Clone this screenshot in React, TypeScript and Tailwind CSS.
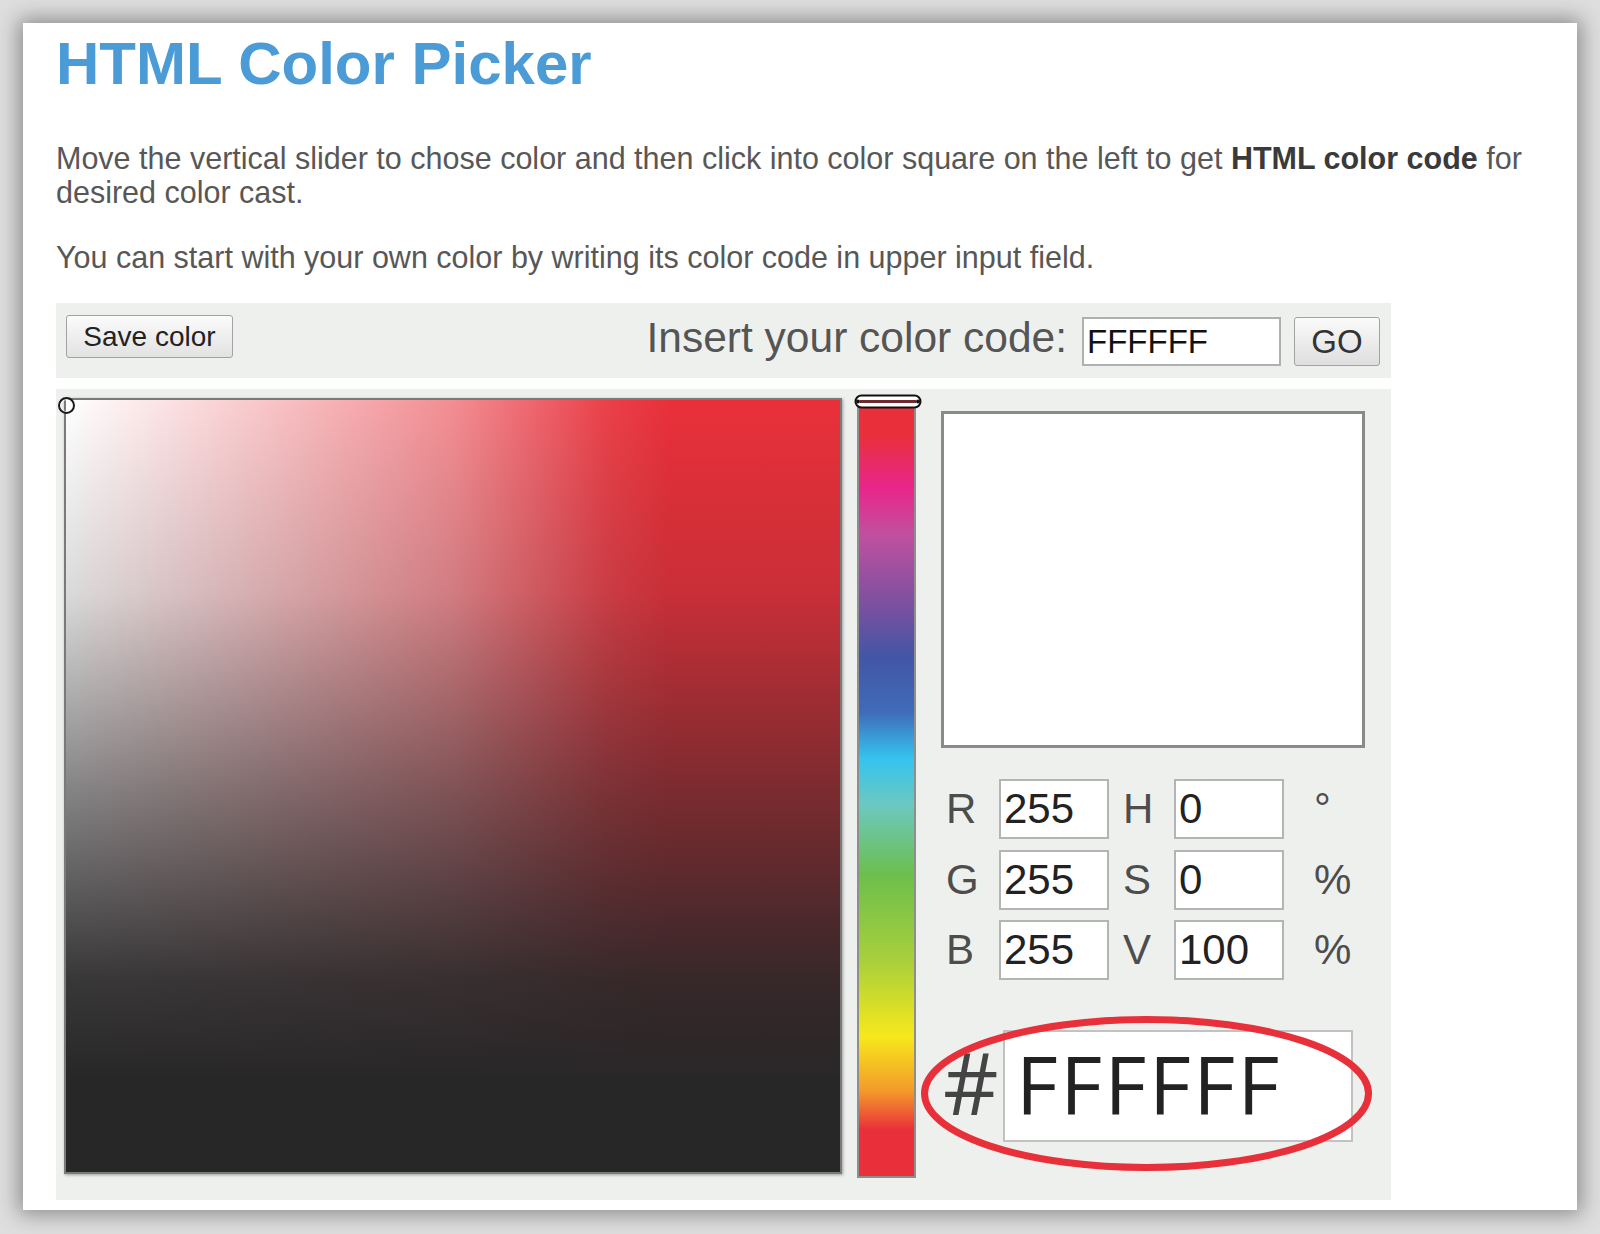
const rows = [
  { label: "R", value: "255", label2: "H", value2: "0", unit: "°" },
  { label: "G", value: "255", label2: "S", value2: "0", unit: "%" },
  { label: "B", value: "255", label2: "V", value2: "100", unit: "%" },
];

const Field = ({ value }: { value: string }) => (
  <div className="h-[60px] w-[110px] border-2 border-[#b4b4b4] bg-white pl-[3px] text-[42px] leading-[56px] text-[#222]">
    {value}
  </div>
);

const App = () => {
  return (
    <div className="min-h-screen bg-[#dedede] px-[23px] pt-[23px] pb-[24px] font-['Liberation_Sans',Arial,sans-serif]">
      <div className="bg-white pl-[33px] pr-[20px] pt-[6px] pb-[10px] shadow-[0_0_20px_4px_rgba(0,0,0,0.38)]">
        <h1 className="text-[60px] font-bold leading-[69px] text-[#4b9bd6]">HTML Color Picker</h1>

        <p className="mt-[43px] text-[30.5px] leading-[34px] text-[#575757]">
          Move the vertical slider to chose color and then click into color square on the left to get{" "}
          <b className="text-[#3a3a3a]">HTML color code</b> for desired color cast.
        </p>
        <p className="mt-[31px] text-[30.5px] leading-[34px] text-[#575757]">
          You can start with your own color by writing its color code in upper input field.
        </p>

        {/* toolbar */}
        <div className="mt-[29px] flex h-[75px] w-[1335px] items-start justify-between bg-[#eef0ee] pl-[10px] pr-[11px]">
          <button className="mt-[12px] h-[43px] w-[167px] rounded-[3px] border border-[#a2a2a2] bg-[linear-gradient(to_bottom,#fbfbfb,#e2e2e2)] text-[28px] leading-[41px] text-[#222]">
            Save color
          </button>
          <div className="mt-[14px] flex items-start">
            <span className="text-[42.5px] leading-[42px] text-[#555]">Insert your color code:</span>
            <div className="ml-[15px] h-[49px] w-[199px] border-2 border-[#b0b0b0] bg-white pl-[3px] text-[33px] leading-[45px] text-[#111]">
              FFFFFF
            </div>
            <button className="ml-[13px] h-[49px] w-[86px] rounded-[3px] border border-[#a2a2a2] bg-[linear-gradient(to_bottom,#fbfbfb,#dedede)] text-[33px] leading-[47px] text-[#333]">
              GO
            </button>
          </div>
        </div>

        {/* picker panel */}
        <div className="mt-[11px] flex h-[811px] w-[1335px] items-start bg-[#eef0ee] pl-[8px]">
          <div className="relative mt-[9px] h-[776px] w-[778px] border-2 border-[#7a7a7a] bg-[#e9303a] shadow-[1px_1px_3px_rgba(0,0,0,0.35)]">
            <div className="h-full w-full bg-[linear-gradient(to_right,rgba(255,255,255,1)_0%,rgba(255,255,255,0.73)_25%,rgba(255,255,255,0.45)_50%,rgba(255,255,255,0.08)_70%,rgba(255,255,255,0)_78%)]">
              <div className="h-full w-full bg-[linear-gradient(to_bottom,rgba(40,39,40,0)_0%,rgba(40,39,40,0.17)_25%,rgba(40,39,40,0.56)_50%,rgba(40,39,40,0.92)_75%,rgba(40,39,40,1)_88%)]" />
            </div>
            <div className="absolute -left-[8px] -top-[3px] h-[17px] w-[17px] rounded-full border-2 border-[#1a1a1a] shadow-[inset_0_0_0_1px_#fff]" />
          </div>

          <div className="relative ml-[15px] mt-[12px] h-[777px] w-[59px] border-2 border-[#8e8e8e] bg-[linear-gradient(to_bottom,#e9303a_0%,#e9303a_4%,#e8268a_11%,#c0509f_17%,#7550a0_27%,#4256a6_33%,#3f6cb8_40%,#34c4ee_46%,#6cc8c0_52%,#6cbf4c_61%,#a8cf3c_72%,#f7e81c_82%,#f39a2a_89%,#e9303a_94%,#e9303a_100%)]">
            <svg className="absolute -left-[5px] -top-[9px]" width="68" height="15" viewBox="0 0 68 15">
              <rect x="1.5" y="1.5" width="65" height="12" rx="6" fill="#fff" stroke="#111" strokeWidth="2" />
              <line x1="6" y1="7.5" x2="62" y2="7.5" stroke="#6e2a2e" strokeWidth="3" />
              <circle cx="4" cy="7.5" r="2" fill="#111" />
              <circle cx="64" cy="7.5" r="2" fill="#111" />
            </svg>
          </div>

          <div className="ml-[25px] mt-[22px] flex flex-col">
            <div className="h-[337px] w-[424px] border-[3px] border-[#8a8a8a] bg-white" />

            <div className="mt-[31px] flex flex-col gap-[10.5px]">
              {rows.map((r) => (
                <div key={r.label} className="flex h-[60px] items-center">
                  <span className="w-[58px] pl-[5px] text-[42px] leading-[60px] text-[#4d4d4d]">{r.label}</span>
                  <Field value={r.value} />
                  <span className="w-[65px] pl-[14px] text-[42px] leading-[60px] text-[#4d4d4d]">{r.label2}</span>
                  <Field value={r.value2} />
                  <span className="pl-[30px] text-[42px] leading-[60px] text-[#4d4d4d]">{r.unit}</span>
                </div>
              ))}
            </div>

            <div className="relative mt-[50px] flex items-start">
              <span className="w-[62px] pl-[2px] font-['Open_Sans',sans-serif] text-[86px] leading-[104px] text-[#444]">#</span>
              <div className="h-[112px] w-[350px] border-2 border-[#c2c2c2] bg-white pl-[11px] font-['Open_Sans',sans-serif] text-[81px] leading-[104px] tracking-[2.5px] text-[#222]">
                FFFFFF
              </div>
              <svg className="pointer-events-none absolute -left-[21px] -top-[15px]" width="453" height="157" viewBox="0 0 453 157">
                <ellipse cx="226.5" cy="78.5" rx="222" ry="74" fill="none" stroke="#e8303a" strokeWidth="7" />
              </svg>
            </div>
          </div>
        </div>
      </div>
    </div>
  );
};

export default App;
